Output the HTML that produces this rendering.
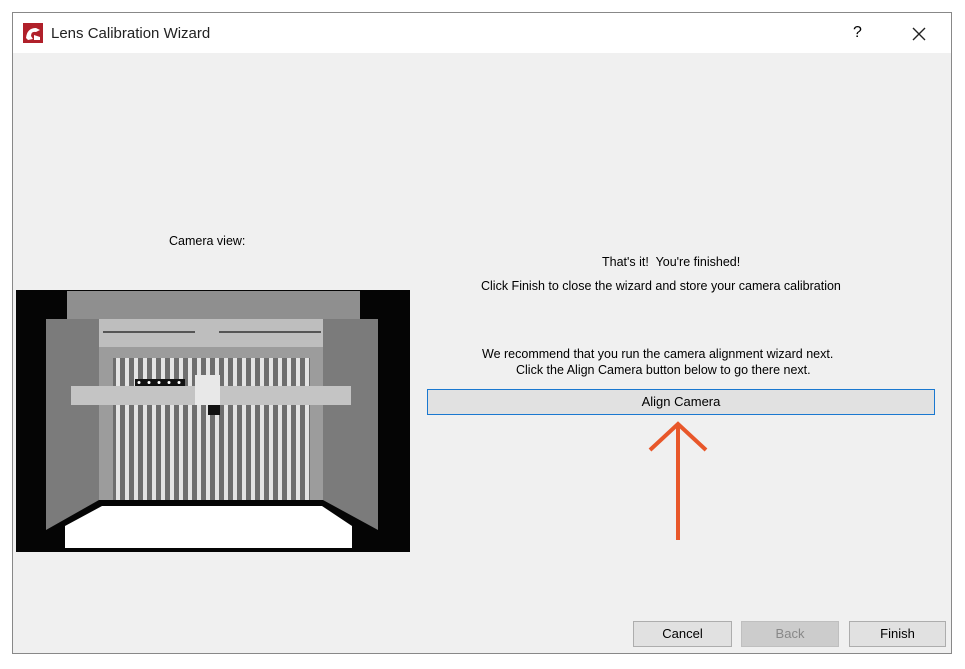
<!DOCTYPE html>
<html><head><style>
body{margin:0;width:965px;height:669px;background:#fff;font-family:"Liberation Sans",Arial,sans-serif;position:relative;overflow:hidden}
.win{position:absolute;left:12px;top:12px;width:938px;height:640px;border:1px solid #888;background:#f0f0f0}
.tb{position:absolute;left:0;top:0;width:938px;height:40px;background:#fff}
.t{position:absolute;font-size:12.5px;color:#000;white-space:nowrap}
.btn{position:absolute;height:26px;background:#e1e1e1;border:1px solid #adadad;box-sizing:border-box;font-size:13px;text-align:center;line-height:24px}
</style></head><body>
<div class="win">
<div class="tb">
<svg style="position:absolute;left:10px;top:10px" width="20" height="20" viewBox="0 0 20 20"><rect width="20" height="20" fill="#b0202a"/><path d="M3 15 Q4 5 13 5 L17 7 L13 9 Q8 8 8 13 L10 16 L5 17Z" fill="#fff"/><path d="M11 12 L17 14 L17 17 L11 17Z" fill="#fff"/></svg>
<div class="t" style="left:38px;top:12px;font-size:15px;color:#222">Lens Calibration Wizard</div>
<div class="t" style="left:840px;top:11px;font-size:16px">?</div>
<svg style="position:absolute;left:899px;top:14px" width="14" height="14"><path d="M1 1L13 13M13 1L1 13" stroke="#222" stroke-width="1.4"/></svg>
</div>
</div>
<div class="t" style="left:169px;top:234px">Camera view:</div>
<svg style="position:absolute;left:16px;top:290px" width="394" height="262" viewBox="16 290 394 262">
<rect x="16" y="290" width="394" height="262" fill="#050505"/>
<rect x="67" y="291" width="293" height="28" fill="#8f8f8f"/>
<polygon points="46,319 99,319 99,500 46,530" fill="#7b7b7b"/>
<polygon points="323,319 378,319 378,530 323,500" fill="#7b7b7b"/>
<rect x="99" y="319" width="224" height="181" fill="#9c9c9c"/>
<rect x="99" y="319" width="224" height="28" fill="#bebebe"/>
<rect x="103" y="331" width="92" height="2" fill="#555"/>
<rect x="219" y="331" width="102" height="2" fill="#555"/>
<rect x="113" y="358" width="197" height="142" fill="#6e6e6e"/>
<g fill="#e4e4e4">
<rect x="116" y="358" width="4" height="142"/><rect x="125" y="358" width="4" height="142"/><rect x="134" y="358" width="4" height="142"/><rect x="143" y="358" width="4" height="142"/><rect x="152" y="358" width="4" height="142"/><rect x="161" y="358" width="4" height="142"/><rect x="170" y="358" width="4" height="142"/><rect x="179" y="358" width="4" height="142"/><rect x="188" y="358" width="4" height="142"/><rect x="197" y="358" width="4" height="142"/><rect x="206" y="358" width="4" height="142"/><rect x="215" y="358" width="4" height="142"/><rect x="224" y="358" width="4" height="142"/><rect x="233" y="358" width="4" height="142"/><rect x="242" y="358" width="4" height="142"/><rect x="251" y="358" width="4" height="142"/><rect x="260" y="358" width="4" height="142"/><rect x="269" y="358" width="4" height="142"/><rect x="278" y="358" width="4" height="142"/><rect x="287" y="358" width="4" height="142"/><rect x="296" y="358" width="4" height="142"/><rect x="305" y="358" width="4" height="142"/>
</g>
<rect x="71" y="386" width="280" height="19" fill="#c4c4c4"/>
<rect x="135" y="379" width="50" height="7" fill="#111"/>
<g fill="#fff"><circle cx="139" cy="382.5" r="1.5"/><circle cx="149" cy="382.5" r="1.5"/><circle cx="159" cy="382.5" r="1.5"/><circle cx="169" cy="382.5" r="1.5"/><circle cx="179" cy="382.5" r="1.5"/></g>
<rect x="195" y="375" width="25" height="30" fill="#e8e8e8"/>
<rect x="208" y="405" width="12" height="10" fill="#111"/>
<rect x="99" y="500" width="224" height="6" fill="#050505"/>
<polygon points="102,506 322,506 352,526 352,548 65,548 65,526" fill="#fff"/>
</svg>
<div class="t" style="left:602px;top:255px">That's it!&nbsp; You're finished!</div>
<div class="t" style="left:481px;top:279px">Click Finish to close the wizard and store your camera calibration</div>
<div class="t" style="left:482px;top:347px">We recommend that you run the camera alignment wizard next.</div>
<div class="t" style="left:516px;top:363px">Click the Align Camera button below to go there next.</div>
<div class="btn" style="left:427px;top:389px;width:508px;border:1.5px solid #1a78d0;line-height:23px">Align Camera</div>
<svg style="position:absolute;left:640px;top:420px" width="80" height="125"><path d="M38 120 L38 6 M10 30 L38 4 L66 30" stroke="#e8572a" stroke-width="4" fill="none"/></svg>
<div class="btn" style="left:633px;top:621px;width:99px">Cancel</div>
<div class="btn" style="left:741px;top:621px;width:98px;background:#cccccc;border-color:#bfbfbf;color:#888">Back</div>
<div class="btn" style="left:849px;top:621px;width:97px">Finish</div>
</body></html>
